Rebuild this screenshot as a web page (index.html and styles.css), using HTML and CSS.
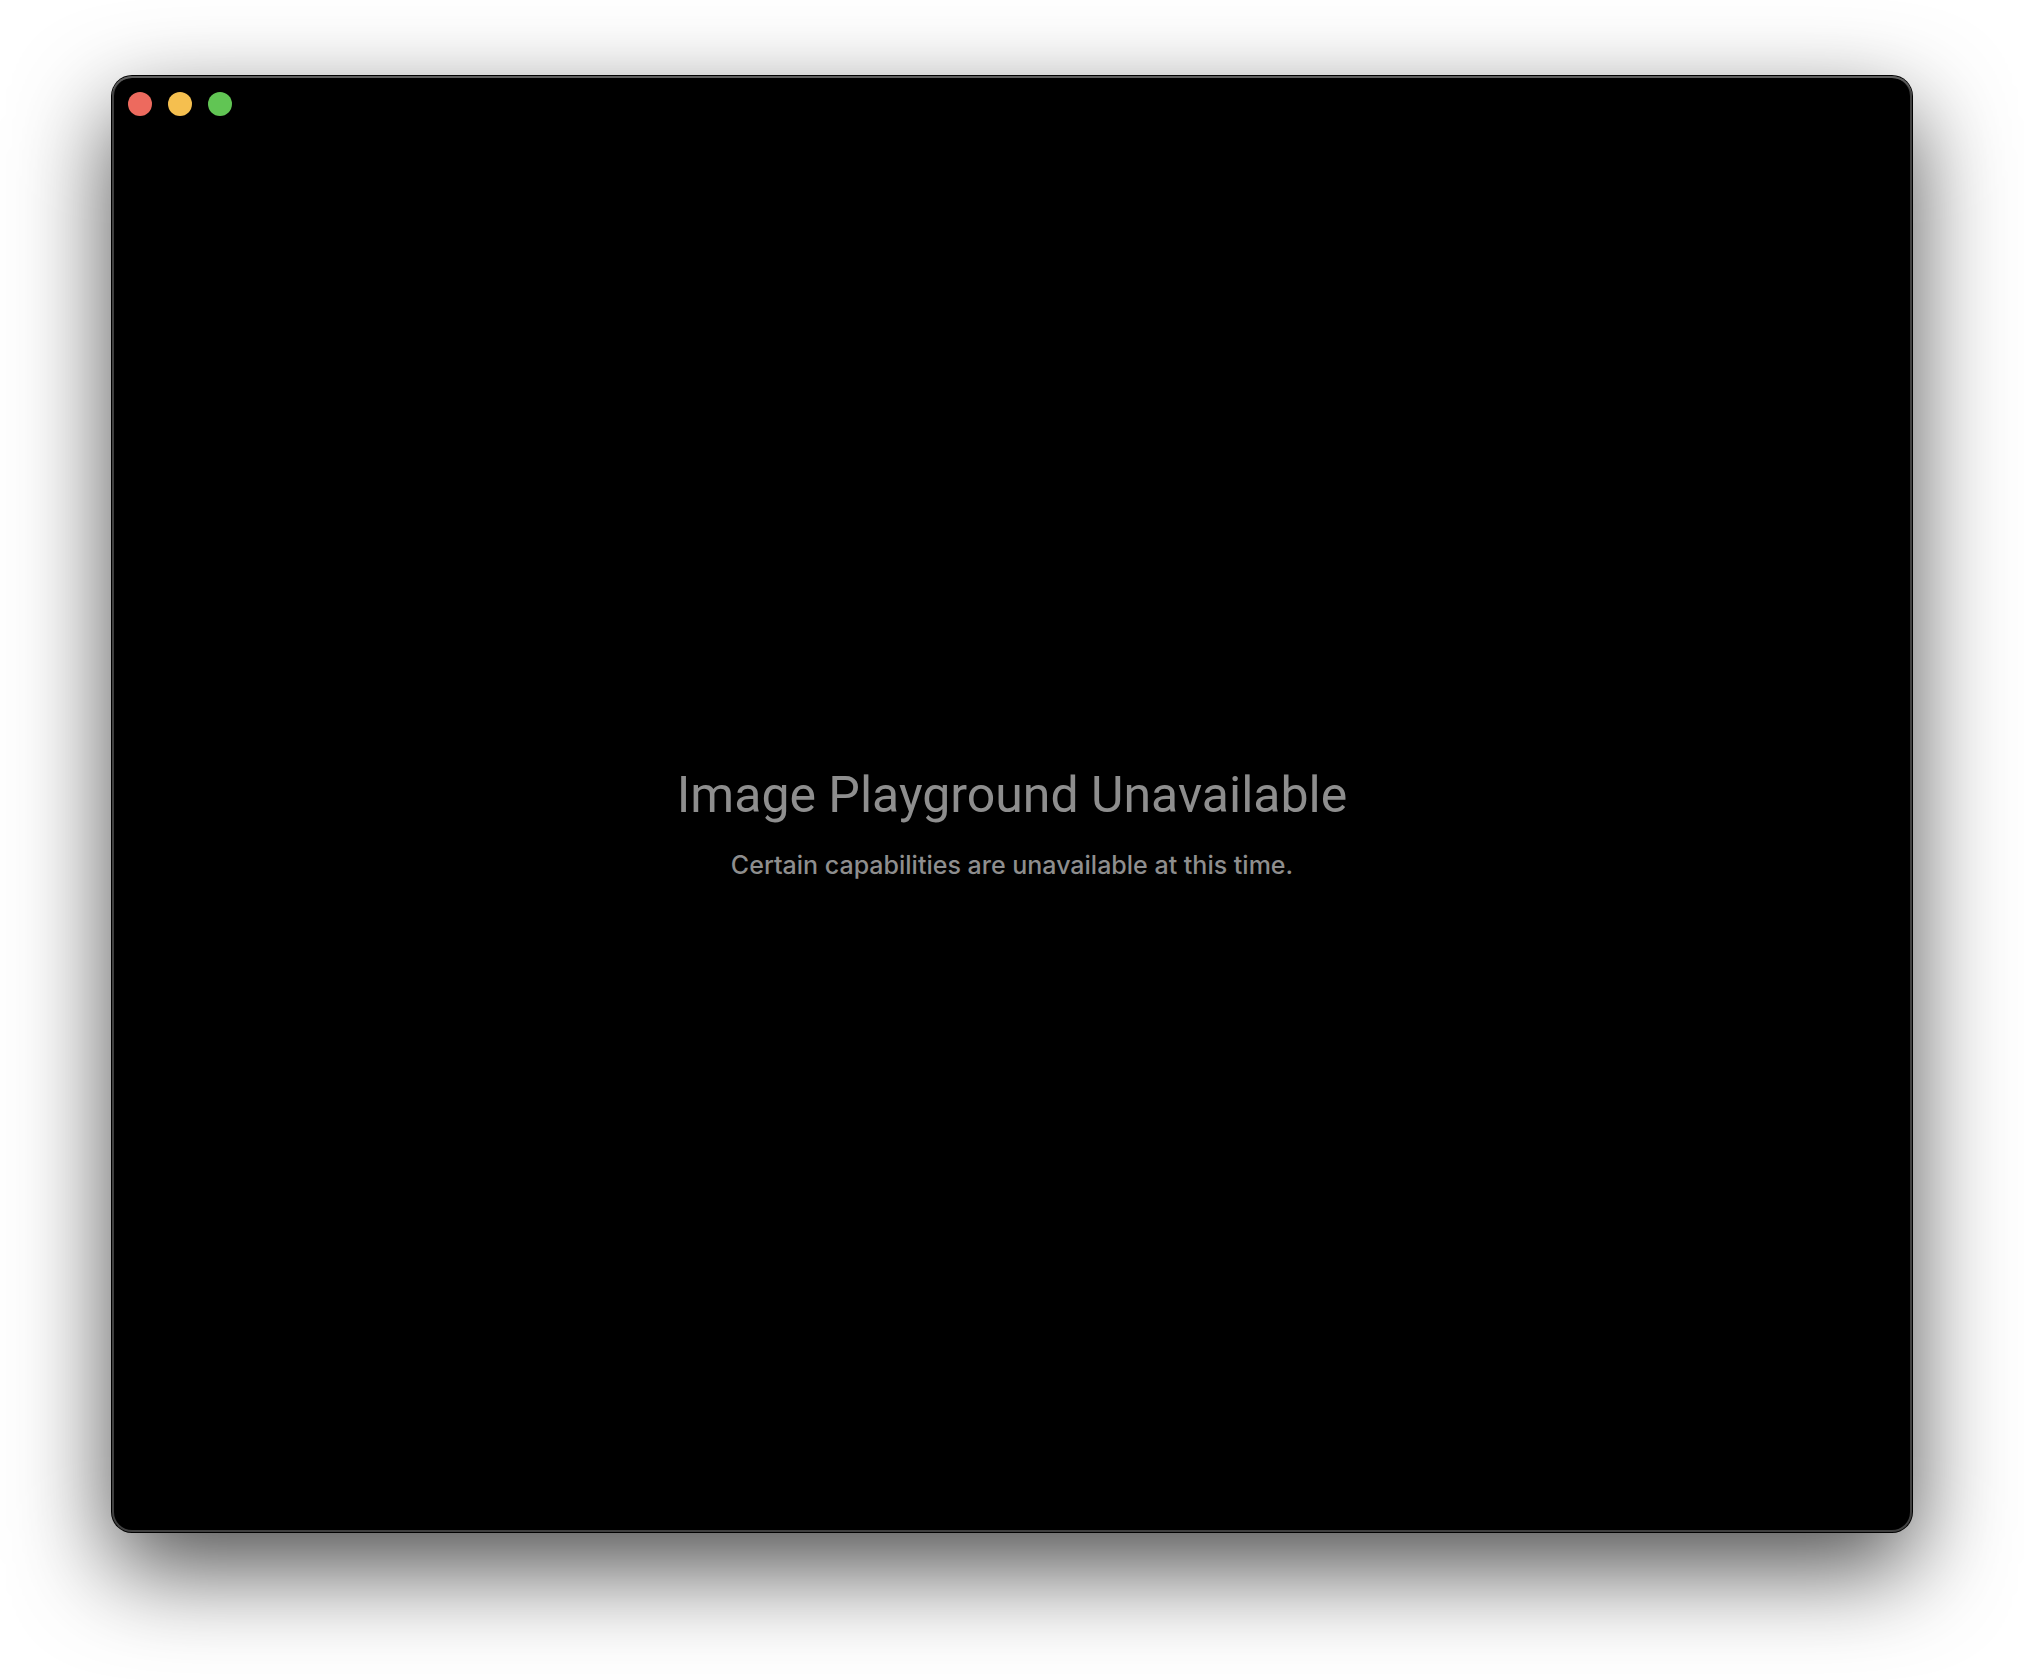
FILE: index.html
```html
<!DOCTYPE html>
<html lang="en">
<head>
<meta charset="utf-8">
<title>Image Playground</title>
<link rel="stylesheet" href="styles.css">
</head>
<body>
<main class="window">
  <header class="titlebar">
    <button class="light light-close" type="button" aria-label="Close"></button>
    <button class="light light-minimize" type="button" aria-label="Minimize"></button>
    <button class="light light-zoom" type="button" aria-label="Zoom"></button>
  </header>
  <section class="message">
    <h1 class="title">Image Playground Unavailable</h1>
    <p class="description">Certain capabilities are unavailable at this time.</p>
  </section>
</main>
</body>
</html>
```
FILE: styles.css
```css
* {
  box-sizing: border-box;
}

body {
  display: flex;
  min-height: 100vh;
  margin: 0;
  padding: 76px 112px 148px;
  background: #fff;
  font-family: Inter, "Liberation Sans", sans-serif;
}

.window {
  display: flex;
  flex: 1;
  flex-direction: column;
  border-radius: 20px;
  background: #000;
  box-shadow:
    inset 0 2px 0 0 #5e5e5e,
    inset 0 0 0 2px #404040,
    0 0 0 1px #000,
    0 36px 96px rgba(0, 0, 0, 0.7);
}

.titlebar {
  display: flex;
  gap: 16px;
  padding: 16px;
}

.light {
  width: 24px;
  height: 24px;
  padding: 0;
  border: 0;
  border-radius: 50%;
}

.light-close {
  background: #ed6a5e;
}

.light-minimize {
  background: #f5bf4f;
}

.light-zoom {
  background: #61c554;
}

.message {
  display: flex;
  flex: 1;
  flex-direction: column;
  align-items: center;
  justify-content: center;
  gap: 22px;
  padding-bottom: 20px;
  color: #8e8e8e;
  text-align: center;
}

.title {
  margin: 0;
  font-family: Roboto, "Liberation Sans", sans-serif;
  font-size: 50px;
  font-weight: 400;
  line-height: 64px;
}

.description {
  margin: 0;
  font-size: 25px;
  font-weight: 500;
  line-height: 32px;
}
```
